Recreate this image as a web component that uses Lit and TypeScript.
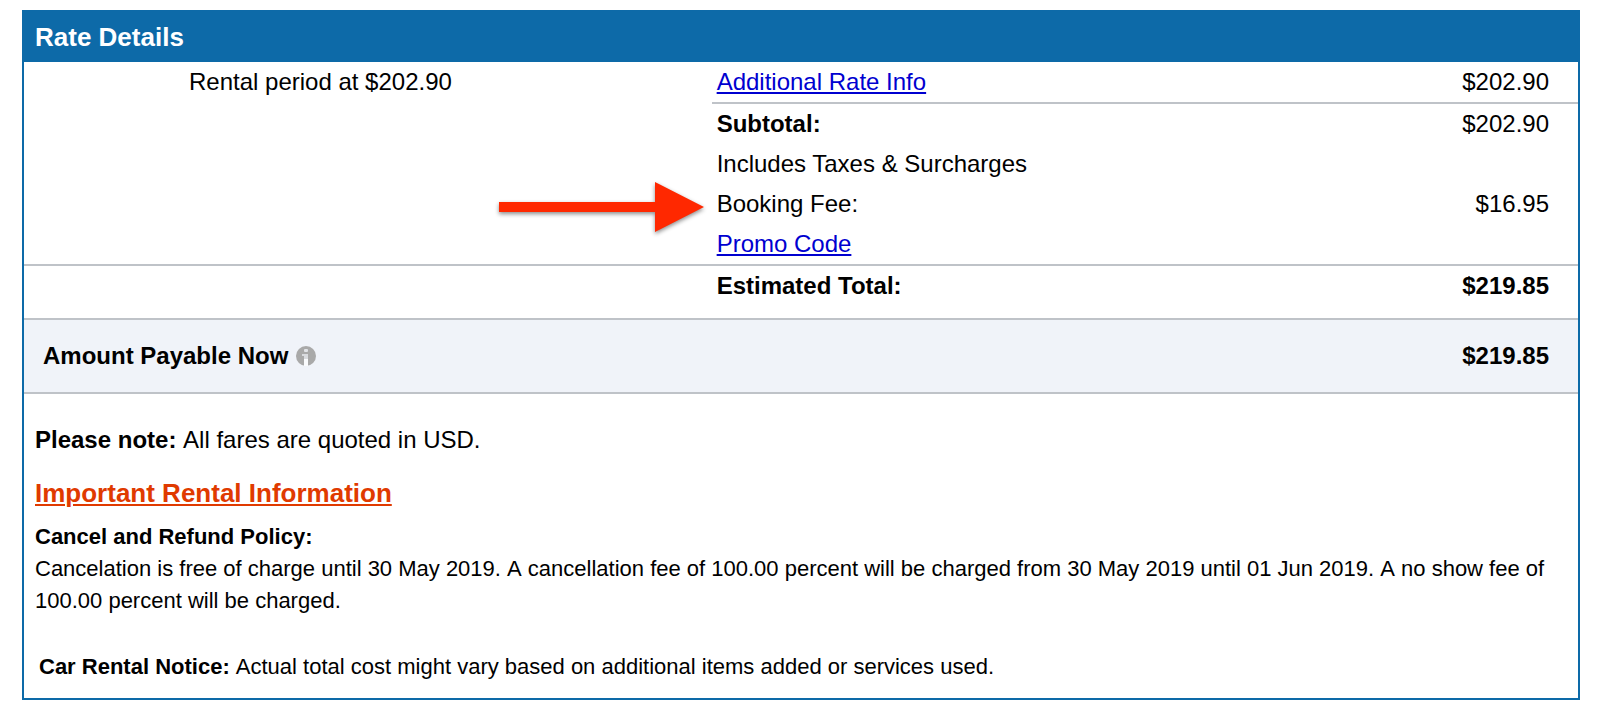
import { LitElement, html, css, svg, nothing } from "lit";
import { customElement, property } from "lit/decorators.js";

interface RateLine {
  label: string;
  amount?: string;
  kind?: "link" | "strong";
  ruled?: boolean;
  flagged?: boolean;
}

const LINES: RateLine[] = [
  { label: "Additional Rate Info", amount: "$202.90", kind: "link", ruled: true },
  { label: "Subtotal:", amount: "$202.90", kind: "strong" },
  { label: "Includes Taxes & Surcharges" },
  { label: "Booking Fee:", amount: "$16.95", flagged: true },
  { label: "Promo Code", kind: "link" },
];

const arrow = svg`
  <svg class="arrow" viewBox="0 0 205 50" width="205" height="50" aria-hidden="true">
    <path d="M0 20H156V0L205 25L156 50V30H0Z" fill="#ff2800" />
  </svg>`;

const infoIcon = svg`
  <svg class="info-icon" viewBox="0 0 20 20" width="20" height="20" aria-hidden="true">
    <circle cx="10" cy="10" r="10" fill="#a9a9a9" />
    <rect x="8" y="3" width="4" height="3" rx="1" fill="#e2e4e8" />
    <path d="M6 8H12V15H8V10H6Z" fill="#d9dbdf" />
    <path d="M8 13H12V20H8Z" fill="#fafbfd" />
  </svg>`;

@customElement("rate-table")
export class RateTable extends LitElement {
  @property({ attribute: false }) lines: RateLine[] = [];

  static styles = css`
    :host { display: block; }
    .rates {
      width: 100%;
      table-layout: fixed;
      border-collapse: separate;
      border-spacing: 0;
      font-size: 24px;
      line-height: 40px;
    }
    .col-period { width: 44.25%; }
    .col-amount { width: 16%; }
    th, td {
      padding: 0;
      text-align: left;
      vertical-align: top;
      font-weight: 400;
    }
    .period { padding-left: 165px; }
    .label { position: relative; padding-left: 5px; }
    .amount { padding-right: 29px; text-align: right; }
    .strong { font-weight: 700; }
    .ruled { border-bottom: 2px solid #bfc3c8; }
    .total > * {
      border-top: 2px solid #bfc3c8;
      padding-bottom: 12px;
      font-weight: 700;
    }
    .payable > * {
      border-top: 2px solid #bfc3c8;
      border-bottom: 2px solid #bfc3c8;
      background: #f0f3f9;
      padding-top: 16px;
      padding-bottom: 16px;
      font-weight: 700;
    }
    .payable-label { padding-left: 19px; }
    .payable-text { display: flex; align-items: center; gap: 8px; }
    .link {
      color: #0000d0;
      text-decoration: underline;
      text-decoration-thickness: 2px;
      text-underline-offset: 2px;
    }
    .info {
      display: flex;
      padding: 0;
      border: 0;
      background: none;
      cursor: pointer;
    }
    .arrow {
      position: absolute;
      top: -2px;
      right: calc(100% + 8px);
      overflow: visible;
      filter: drop-shadow(0 2px 2px rgba(0, 0, 0, 0.45));
    }
  `;

  private row(line: RateLine, index: number) {
    const rule = line.ruled ? "ruled" : "";
    const weight = line.kind === "strong" ? "strong" : "";
    return html`<tr>
      ${index === 0
        ? html`<td class="period" rowspan=${this.lines.length}>Rental period at $202.90</td>`
        : nothing}
      <th scope="row" class="label ${rule} ${weight}">
        ${line.flagged ? arrow : nothing}${line.kind === "link"
          ? html`<a class="link" href="#">${line.label}</a>`
          : line.label}
      </th>
      <td class="amount ${rule}">${line.amount ?? nothing}</td>
    </tr>`;
  }

  render() {
    return html`<table class="rates">
      <colgroup>
        <col class="col-period" />
        <col />
        <col class="col-amount" />
      </colgroup>
      <tbody>
        ${this.lines.map((line, index) => this.row(line, index))}
        <tr class="total">
          <td></td>
          <th scope="row" class="label">Estimated Total:</th>
          <td class="amount">$219.85</td>
        </tr>
      </tbody>
      <tfoot>
        <tr class="payable">
          <th scope="row" class="payable-label" colspan="2">
            <span class="payable-text">
              Amount Payable Now
              <button class="info" type="button" aria-label="About the amount payable now">${infoIcon}</button>
            </span>
          </th>
          <td class="amount">$219.85</td>
        </tr>
      </tfoot>
    </table>`;
  }
}

@customElement("app-root")
export class AppRoot extends LitElement {
  static styles = css`
    :host {
      display: block;
      padding: 10px 20px 20px 22px;
      background: #fff;
      color: #000;
      font-family: "Liberation Sans", Arial, Helvetica, sans-serif;
    }
    .panel { border: 2px solid #0d6aa8; }
    .title {
      margin: 0;
      padding: 0 11px;
      background: #0d6aa8;
      color: #fff;
      font-size: 26px;
      line-height: 50px;
    }
    .notes {
      padding: 30px 11px 15px;
      font-size: 22px;
      line-height: 32px;
      font-kerning: none;
    }
    .notes p, .notes h3 { margin: 0; font-size: inherit; }
    .notes .currency { font-size: 24px; margin-bottom: 21px; }
    .notes .important { font-size: 26px; font-weight: 700; margin-bottom: 12px; }
    .notes .policy { margin-bottom: 34px; }
    .notes .notice { padding-left: 4px; }
    .important-link {
      color: #e03a00;
      text-decoration: underline;
      text-decoration-thickness: 2px;
      text-underline-offset: 2px;
    }
  `;

  render() {
    return html`<main class="panel">
      <h2 class="title">Rate Details</h2>
      <rate-table .lines=${LINES}></rate-table>
      <section class="notes">
        <p class="currency"><strong>Please note:</strong> All fares are quoted in USD.</p>
        <p class="important"><a class="important-link" href="#">Important Rental Information</a></p>
        <h3>Cancel and Refund Policy:</h3>
        <p class="policy">
          Cancelation is free of charge until 30 May 2019. A cancellation fee of 100.00 percent will be
          charged from 30 May 2019 until 01 Jun 2019. A no show fee of 100.00 percent will be charged.
        </p>
        <p class="notice">
          <strong>Car Rental Notice:</strong> Actual total cost might vary based on additional items
          added or services used.
        </p>
      </section>
    </main>`;
  }
}
